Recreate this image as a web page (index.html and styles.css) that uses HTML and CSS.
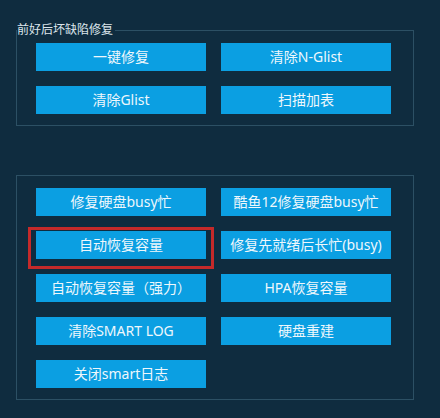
FILE: index.html
```html
<!DOCTYPE html>
<html>
<head>
<meta charset="utf-8">
<link rel="stylesheet" href="styles.css">
</head>
<body>
<div class="page">
  <fieldset class="group group-top">
    <legend class="group-title">前好后坏缺陷修复</legend>
    <div class="grid">
      <button class="btn">一键修复</button>
      <button class="btn">清除N-Glist</button>
      <button class="btn">清除Glist</button>
      <button class="btn">扫描加表</button>
    </div>
  </fieldset>
  <fieldset class="group group-bottom">
    <div class="grid">
      <button class="btn">修复硬盘busy忙</button>
      <button class="btn">酷鱼12修复硬盘busy忙</button>
      <button class="btn">自动恢复容量</button>
      <button class="btn">修复先就绪后长忙(busy)</button>
      <button class="btn">自动恢复容量（强力）</button>
      <button class="btn">HPA恢复容量</button>
      <button class="btn">清除SMART LOG</button>
      <button class="btn">硬盘重建</button>
      <button class="btn">关闭smart日志</button>
    </div>
  </fieldset>
  <div class="highlight"></div>
</div>
</body>
</html>
```
FILE: styles.css
```css
html, body {
  margin: 0;
  padding: 0;
  background: #0f2c3f;
}
body {
  width: 440px;
  height: 418px;
  overflow: hidden;
  font-family: "Noto Sans", "Noto Sans CJK SC", sans-serif;
}
.page {
  position: relative;
  padding-top: 22px;
}
.group {
  box-sizing: border-box;
  width: 398px;
  margin: 0 0 0 16px;
  border: 1px solid #2c5064;
  padding: 0 20px 11px 19px;
  min-width: 0;
}
.group-top {
  padding-top: 5px;
}
.group-bottom {
  margin-top: 49px;
  padding-top: 12px;
}
.group-title {
  font-size: 12px;
  line-height: 16px;
  color: #dde6ec;
  padding: 0 2px 0 0;
  margin-left: -19px;
}
.grid {
  display: grid;
  grid-template-columns: 170px 170px;
  column-gap: 15px;
  row-gap: 15px;
}
.btn {
  display: block;
  height: 28px;
  margin: 0;
  padding: 0;
  border: none;
  background: #0b9fe2;
  color: #eef7fc;
  font-family: "Noto Sans", "Noto Sans CJK SC", sans-serif;
  font-size: 14px;
  line-height: 28px;
  text-align: center;
  white-space: nowrap;
}
.highlight {
  position: absolute;
  left: 28px;
  top: 227px;
  width: 180px;
  height: 36px;
  border: 3px solid #c42a2a;
}
```
